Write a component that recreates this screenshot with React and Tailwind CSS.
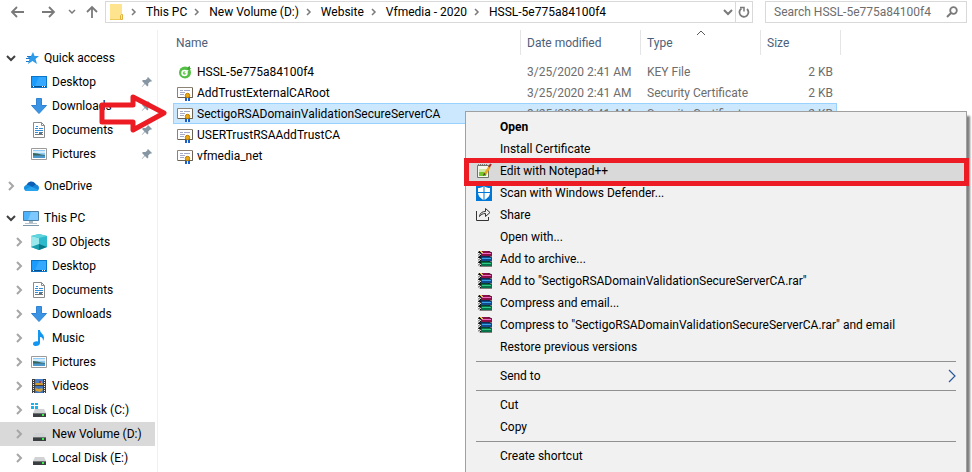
import clsx from "clsx";

const crumbs = ["This PC", "New Volume (D:)", "Website", "Vfmedia - 2020", "HSSL-5e775a84100f4"];

const quickAccess = [
  { name: "Desktop", icon: DesktopIcon },
  { name: "Downloads", icon: DownloadsIcon },
  { name: "Documents", icon: DocumentsIcon },
  { name: "Pictures", icon: PicturesIcon },
];

const thisPc = [
  { name: "3D Objects", icon: ObjectsIcon },
  { name: "Desktop", icon: DesktopIcon },
  { name: "Documents", icon: DocumentsIcon },
  { name: "Downloads", icon: DownloadsIcon },
  { name: "Music", icon: MusicIcon },
  { name: "Pictures", icon: PicturesIcon },
  { name: "Videos", icon: VideosIcon },
  { name: "Local Disk (C:)", icon: SystemDiskIcon },
  { name: "New Volume (D:)", icon: DiskIcon, selected: true },
  { name: "Local Disk (E:)", icon: DiskIcon },
];

const files = [
  { name: "HSSL-5e775a84100f4", type: "KEY File", icon: KeyFileIcon },
  { name: "AddTrustExternalCARoot", type: "Security Certificate", icon: CertificateIcon },
  {
    name: "SectigoRSADomainValidationSecureServerCA",
    type: "Security Certificate",
    icon: CertificateIcon,
    selected: true,
  },
  { name: "USERTrustRSAAddTrustCA", type: "Security Certificate", icon: CertificateIcon },
  { name: "vfmedia_net", type: "Security Certificate", icon: CertificateIcon },
];

const menu = [
  [
    { label: "Open", bold: true },
    { label: "Install Certificate" },
    { label: "Edit with Notepad++", icon: NotepadIcon, highlighted: true },
    { label: "Scan with Windows Defender...", icon: DefenderIcon },
    { label: "Share", icon: ShareIcon },
    { label: "Open with..." },
    { label: "Add to archive...", icon: RarIcon },
    { label: 'Add to "SectigoRSADomainValidationSecureServerCA.rar"', icon: RarIcon },
    { label: "Compress and email...", icon: RarIcon },
    { label: 'Compress to "SectigoRSADomainValidationSecureServerCA.rar" and email', icon: RarIcon },
    { label: "Restore previous versions" },
  ],
  [{ label: "Send to", submenu: true }],
  [{ label: "Cut" }, { label: "Copy" }],
  [{ label: "Create shortcut" }],
];

function Svg({ size = 16, className, children }) {
  return (
    <svg
      className={clsx("block shrink-0", className)}
      width={size}
      height={size}
      viewBox={`0 0 ${size} ${size}`}
      fill="none"
      aria-hidden="true"
    >
      {children}
    </svg>
  );
}

function DesktopIcon() {
  return (
    <Svg>
      <path d="M0 2h16v12H0z" fill="#0b76c9" />
      <path d="M1 3h14v9H1z" fill="#1a9cff" />
      <path d="M8 3h7v9H4z" fill="#35a9ff" />
      <path d="M1 12h14v1H1z" fill="#0a4f8c" />
      <path d="M2 12h1v1H2zM11 12h1v1h-1zM13 12h1v1h-1z" fill="#fff" />
    </Svg>
  );
}

function DownloadsIcon() {
  return (
    <Svg>
      <path d="M5.500.500h5v7h5L8 15.500.5 7.500h5z" fill="#3b93e4" stroke="#2f83d2" />
    </Svg>
  );
}

function DocumentsIcon() {
  return (
    <Svg>
      <path d="M2.500.500h8l3 3v12h-11z" fill="#fff" stroke="#8a8a8a" />
      <path d="M10.500.500v3h3" stroke="#8a8a8a" />
      <path d="M4 6.500h3M5 4.500h2M4 8.500h8M8 6.500h4M4 10.500h3" stroke="#2f8fdc" />
      <path d="M4 12.500h8M8 10.500h4" stroke="#777" />
      <path d="M8 10h3v2H8z" fill="#4b7896" />
    </Svg>
  );
}

function PicturesIcon() {
  return (
    <Svg>
      <path d="M.5 2.500h15v11H.5z" fill="#fff" stroke="#9b9b9b" />
      <path d="M2 4h12v8H2z" fill="#8fcbf5" />
      <path d="M2 5h12v2H2z" fill="#d5ecfb" />
      <path d="M2 7c3 0 6 1 8 1.500l4 .5v1H2z" fill="#39675c" />
      <path d="M2 9.500h12V12H2z" fill="#4b97cc" />
    </Svg>
  );
}

function ObjectsIcon() {
  return (
    <Svg>
      <path d="M8 0l8 2v11l-8 3-8-3V2z" fill="#2cb9cb" />
      <path d="M0 2l8 2v7l-8 2z" fill="#9ae7ec" />
      <path d="M0 2l8-2 8 2-8 2z" fill="#5fd4dd" />
      <path d="M0 13l8-3v6z" fill="#1b9cad" />
      <path d="M8 10l8 3-8 3z" fill="#087889" />
    </Svg>
  );
}

function MusicIcon() {
  return (
    <Svg>
      <path
        d="M7 0h2c0 3 4 4 4 8 0 1-.5 2-1 3 0-3-1-4-3-4v6c0 2-2 3-4 3-1.500 0-3-.6-3-2 0-2 2-3 5-2.600z"
        fill="#1296f0"
      />
    </Svg>
  );
}

function VideosIcon() {
  return (
    <Svg>
      <path d="M1 1h14v14H1z" fill="#3d3d3d" />
      <path d="M4 1h8v6H4z" fill="#4c7fc4" />
      <path d="M4 8h8v7H4z" fill="#3f74bd" />
      <path d="M5 5h3l2-2 2 3v1H4z" fill="#d19a2e" />
      <path d="M4 10l4 1 3-1 1 2-3 2-4-1z" fill="#d8a232" />
      <path d="M8 3h2v2H8z" fill="#a33a4b" />
      <path d="M2.500 2v13M13.500 2v13" stroke="#f2f2f2" strokeDasharray="1 1" />
    </Svg>
  );
}

function Drive() {
  return (
    <>
      <path d="M4 7h9l2 4H2z" fill="#d0d2d4" />
      <path d="M2 11h13v4H2z" fill="#3b3f41" />
      <path d="M2 11.500h13" stroke="#6f7477" />
      <path d="M11 12h2v2h-2z" fill="#3ef04a" />
    </>
  );
}

function DiskIcon() {
  return (
    <Svg>
      <Drive />
    </Svg>
  );
}

function SystemDiskIcon() {
  return (
    <Svg>
      <Drive />
      <path d="M0 1h3v2H0zM4 1h3v2H4zM0 4h3v3H0zM4 4h3v3H4z" fill="#18b4ee" />
    </Svg>
  );
}

function StarIcon() {
  return (
    <Svg>
      <path d="M10 2l1.500 4H16l-3.500 3 1.500 5-4.500-3L5 14l1.500-5L4 6h4z" fill="#2d9be8" />
      <path d="M4 6.500h4M3 8.500h4M3 11.500h3" stroke="#1c78cf" />
    </Svg>
  );
}

function CloudIcon() {
  return (
    <Svg>
      <path d="M3.500 7a5 5 0 0 1 8.800-1.500L14 8l-7 4-5-2z" fill="#0d5eb5" />
      <path d="M3 13a3.200 3.200 0 0 1 0-6c2-.6 4 .4 5 1.500L10 13z" fill="#1490df" />
      <path d="M12.500 6.500c2 0 3.500 1.500 3.500 3.500 0 1.800-1.300 3-3 3H3l7.500-5z" fill="#1784d8" />
      <path d="M1.500 12L8 8.500l7.500 3.300c-.5.800-1.500 1.200-2.500 1.200H3.500z" fill="#29a3ee" />
    </Svg>
  );
}

function ComputerIcon() {
  return (
    <Svg>
      <path d="M.5 1.500h15v9H.5z" fill="#4fb3fb" stroke="#4f7fa1" />
      <path d="M8 2h7v8H5z" fill="#7cc8ff" />
      <path d="M6 11h4v2H6z" fill="#a8b9c5" />
      <path d="M2 13.500h12" stroke="#b7c4ce" />
      <path d="M0 15.500h16" stroke="#7e97a8" />
    </Svg>
  );
}

function KeyFileIcon() {
  return (
    <Svg>
      <circle cx="8" cy="8.500" r="6" fill="#55bf45" />
      <circle cx="7.500" cy="9" r="2.500" fill="#6fd05b" stroke="#fff" strokeWidth="1.500" />
      <path d="M8 9l4-4" stroke="#fff" strokeWidth="1.500" />
      <path d="M10 6l1-3 2-1v2l1 .5-2 2z" fill="#3fa832" />
    </Svg>
  );
}

function CertificateIcon() {
  return (
    <Svg>
      <path d="M.5 2.500h15v10H.5z" fill="#fff" stroke="#8c8375" />
      <path d="M15.500 3v9.500H1" stroke="#6b6253" />
      <path d="M3 5.500h3M7 5.500h6M3 7.500h5M3 9.500h4" stroke="#a5abc4" />
      <path d="M9 12v4M12 12v4" stroke="#1d5fc8" strokeWidth="2" />
      <path d="M10 13h1v3h-1z" fill="#fff" />
      <circle cx="10.500" cy="10.500" r="2.200" fill="#e9a90f" stroke="#b97a06" />
    </Svg>
  );
}

function NotepadIcon() {
  return (
    <Svg>
      <path d="M1.500 2.500h11v12h-11z" fill="#f6f7ef" stroke="#6e7466" />
      <path d="M3 8h8l-1 5H3z" fill="#72c52a" />
      <path d="M3 6h8v3H3z" fill="#cce9a1" />
      <path d="M2 1.500h10" stroke="#777" strokeDasharray="1 1" />
      <path d="M13.500 4L9 11" stroke="#f0a622" strokeWidth="2.500" />
      <path d="M15 1l-2 3" stroke="#a3262b" strokeWidth="2" />
      <path d="M7 13l1-3 2 1z" fill="#4e3c24" />
    </Svg>
  );
}

function DefenderIcon() {
  return (
    <Svg>
      <path d="M0 0h16v16H0z" fill="#0078d7" />
      <path d="M8 1c2 1.500 3.500 2 6 2v4c0 4-2.500 6.500-6 8-3.500-1.500-6-4-6-8V3c2.500 0 4-.5 6-2z" fill="#fff" />
      <path d="M8 1v14M2 7.500h12" stroke="#0078d7" />
    </Svg>
  );
}

function ShareIcon() {
  return (
    <Svg>
      <path
        d="M.5 4v9.500h12V10M3.500 9.500C4 6 6 4.500 9.500 4.500v-3l4.500 4-4.500 4v-3c-3 0-4.500 1-6 3z"
        stroke="#333"
      />
    </Svg>
  );
}

// One book of the WinRAR stack
function Book({ y, cover, light }) {
  return (
    <g transform={`translate(0 ${y})`}>
      <path d="M3 0h10l3 1.500v4H4L1 3.500z" fill="#111" />
      <path d="M3 0h9l4 2H6z" fill={cover} />
      <path d="M5 2h11v3H5z" fill={cover} />
      <path d="M6 2.500h9" stroke={light} />
      <path d="M0 1.500l5 2M0 3l4 1.500" stroke="#fff" />
    </g>
  );
}

function RarIcon() {
  return (
    <Svg>
      <Book y={10} cover="#08734a" light="#2fca83" />
      <Book y={5} cover="#104a91" light="#39a4e6" />
      <Book y={0} cover="#8b1048" light="#ef6cc0" />
      <path d="M4 .5h2M5 1.500h2" stroke="#e8cf3f" />
    </Svg>
  );
}

function FolderIcon() {
  return (
    <Svg className="mr-1">
      <path d="M0 0h12v16H0z" fill="#ffe490" />
      <path d="M0 15.500h10" stroke="#efc95a" />
      <path d="M10.500 15.500v-4l1-1h1v5z" fill="#ffe9a6" stroke="#e0b13c" />
    </Svg>
  );
}

function PinIcon() {
  return (
    <Svg size={12}>
      <path
        d="M7 1l4 4-1 .7-.8-.2-2 2 .1 2-1 1L4 8l-3 3-.3-.3L3.500 7.500 1 5l1-1 2.500.1 2-1.800L6.300 1.700z"
        fill="#8796a3"
      />
    </Svg>
  );
}

function ChevronRight({ className }) {
  return (
    <Svg size={10} className={className}>
      <path d="M3 1l4 4-4 4" stroke="currentColor" strokeWidth="2" />
    </Svg>
  );
}

function ChevronDown({ className }) {
  return (
    <Svg size={10} className={className}>
      <path d="M1 3l4 4 4-4" stroke="currentColor" strokeWidth="2" />
    </Svg>
  );
}

function Toolbar() {
  return (
    <header className="flex h-6 items-start pt-px text-[#7a7a7a]">
      <nav className="flex h-[22px] w-[105px] shrink-0 items-center pl-2.5" aria-label="History">
        <button aria-label="Back">
          <Svg>
            <path d="M2 8h12M7 3L2 8l5 5" stroke="currentColor" strokeWidth="1.800" />
          </Svg>
        </button>
        <button className="ml-3.5" aria-label="Forward">
          <Svg>
            <path d="M2 8h12M9 3l5 5-5 5" stroke="currentColor" strokeWidth="1.800" />
          </Svg>
        </button>
        <button className="ml-3" aria-label="Recent locations">
          <Svg size={8}>
            <path d="M1 2l3 3 3-3" stroke="currentColor" strokeWidth="1.500" />
          </Svg>
        </button>
        <button className="ml-2" aria-label="Up">
          <Svg>
            <path d="M8 14V3M3 8l5-5 5 5" stroke="currentColor" strokeWidth="1.800" />
          </Svg>
        </button>
      </nav>
      <div className="flex h-[22px] flex-1 items-center border border-[#d9d9d9] pl-1">
        <FolderIcon />
        {crumbs.map((crumb) => (
          <span key={crumb} className="flex items-center">
            <Svg size={8} className="mr-2">
              <path d="M2 1l3 3-3 3" stroke="currentColor" strokeWidth="1.500" />
            </Svg>
            <button className="mr-1.5 whitespace-nowrap text-black">{crumb}</button>
          </span>
        ))}
        <button className="mr-0.5 ml-auto" aria-label="Previous locations">
          <ChevronDown />
        </button>
        <button
          className="flex h-full w-[17px] items-center justify-center border-l border-[#d9d9d9]"
          aria-label="Refresh"
        >
          <Svg size={12}>
            <path d="M3.500 2.500A4.500 4.500 0 1 0 9 3" stroke="currentColor" strokeWidth="1.800" />
            <path d="M2 1.500h4v4" stroke="currentColor" strokeWidth="1.500" />
          </Svg>
        </button>
      </div>
      <label className="mr-[5px] ml-3 flex h-[22px] w-[202px] items-center border border-[#d9d9d9] pr-2 pl-2">
        <input
          className="w-0 flex-1 outline-none placeholder:text-[#6d6d6d]"
          aria-label="Search"
          placeholder="Search HSSL-5e775a84100f4"
        />
        <Svg size={12}>
          <circle cx="7.500" cy="4.500" r="3.300" stroke="currentColor" strokeWidth="1.800" />
          <path d="M5 7l-4 4" stroke="currentColor" strokeWidth="2" />
        </Svg>
      </label>
    </header>
  );
}

function TreeRoot({ name, icon: Icon, open, className }) {
  return (
    <button className={clsx("flex h-6 w-full items-center pl-1.5", className)}>
      {open ? <ChevronDown className="text-[#404040]" /> : <ChevronRight className="text-[#a6a6a6]" />}
      <span className="mr-[5px] ml-[7px]">
        <Icon />
      </span>
      {name}
    </button>
  );
}

function TreeItem({ name, icon: Icon, selected, pinned }) {
  return (
    <li>
      <button className={clsx("flex h-6 w-full items-center pl-3.5", selected && "bg-[#d9d9d9]")}>
        <ChevronRight className={clsx("mr-[7px] text-[#a6a6a6]", pinned && "invisible")} />
        <Icon />
        <span className="ml-[5px] flex-1 text-left whitespace-nowrap">{name}</span>
        {pinned && (
          <span className="mr-0.5">
            <PinIcon />
          </span>
        )}
      </button>
    </li>
  );
}

function Sidebar() {
  return (
    <aside className="w-[158px] shrink-0 border-r border-[#f0f0f0] pt-4 pr-0.5">
      <TreeRoot name="Quick access" icon={StarIcon} open />
      <ul>
        {quickAccess.map((item) => (
          <TreeItem key={item.name} {...item} pinned />
        ))}
      </ul>
      <TreeRoot name="OneDrive" icon={CloudIcon} className="my-2" />
      <TreeRoot name="This PC" icon={ComputerIcon} open />
      <ul>
        {thisPc.map((item) => (
          <TreeItem key={item.name} {...item} />
        ))}
      </ul>
    </aside>
  );
}

function FileTable() {
  const heading = "h-[25px] border-r border-[#e5e5e5] p-0 text-left font-normal";
  return (
    <table className="ml-[15px] w-[668px] table-fixed border-separate border-spacing-0">
      <colgroup>
        <col />
        <col className="w-[120px]" />
        <col className="w-[120px]" />
        <col className="w-[76px]" />
        <col className="w-1" />
      </colgroup>
      <thead className="text-[#4c607a]">
        <tr>
          <th className={clsx(heading, "pl-[3px]")}>Name</th>
          <th className={clsx(heading, "pl-1.5")}>Date modified</th>
          <th className={clsx(heading, "relative pl-1.5")}>
            <Svg size={8} className="absolute top-0 left-14">
              <path d="M0 5l4-4 4 4" stroke="#5a5a5a" />
            </Svg>
            Type
          </th>
          <th className="p-0 pl-1.5 text-left font-normal">Size</th>
          <th className={heading} />
        </tr>
        <tr className="h-1.5" />
      </thead>
      <tbody>
        {files.map(({ name, type, icon: Icon, selected }) => {
          const cell = clsx(
            "h-[21px] border-y p-0 whitespace-nowrap",
            selected ? "border-[#99d1ff] bg-[#cce8ff]" : "border-transparent"
          );
          return (
            <tr key={name} className="text-[#6d6d6d]">
              <td className={clsx(cell, "border-l pl-[3px] text-black")}>
                <span className="flex items-center gap-1">
                  <Icon />
                  {name}
                </span>
              </td>
              <td className={clsx(cell, "pl-1.5")}>3/25/2020 2:41 AM</td>
              <td className={clsx(cell, "pl-1.5")}>{type}</td>
              <td className={clsx(cell, "border-r pr-[3px] text-right")}>2 KB</td>
            </tr>
          );
        })}
      </tbody>
    </table>
  );
}

function ContextMenu() {
  return (
    <div
      className="absolute top-[111px] left-[465px] h-[520px] w-[502px] border border-[#a0a0a0] bg-[#f1f1f1] py-1 shadow-[3px_5px_2px_rgba(0,0,0,0.5)]"
      role="menu"
    >
      {menu.map((group, index) => (
        <div key={index}>
          {index > 0 && <hr className="mx-2.5 my-[3px] border-[#919191]" />}
          {group.map(({ label, icon: Icon, bold, submenu, highlighted }) => (
            <div key={label} className="relative">
              <button
                className={clsx(
                  "flex h-[22px] w-full items-center gap-2 px-2.5 whitespace-nowrap",
                  bold && "font-bold",
                  highlighted && "bg-[#d9d9d9]"
                )}
                role="menuitem"
              >
                <span className="w-4 shrink-0">{Icon && <Icon />}</span>
                {label}
                {submenu && (
                  <Svg className="ml-auto">
                    <path d="M9 2l6 6-6 6" stroke="#2a5a9a" strokeWidth="1.200" />
                  </Svg>
                )}
              </button>
              {highlighted && (
                <span className="pointer-events-none absolute -top-0.5 -right-[3px] -left-0.5 z-10 h-7 border-5 border-[#ed1c24]" />
              )}
            </div>
          ))}
        </div>
      ))}
    </div>
  );
}

export default function App() {
  return (
    <div className="relative flex h-screen flex-col overflow-hidden bg-white font-['Roboto','Noto_Sans',sans-serif] text-[12px] leading-4 text-black">
      <Toolbar />
      <div className="flex flex-1 pt-1.5">
        <Sidebar />
        <main className="flex-1">
          <FileTable />
        </main>
      </div>
      <svg
        className="pointer-events-none absolute top-[90px] left-[97px]"
        width="72"
        height="46"
        viewBox="0 0 72 46"
        fill="none"
        aria-hidden="true"
      >
        <path d="M5 15h31V7l31 16-31 17v-8H5z" stroke="#ed1c24" strokeWidth="5" strokeLinejoin="round" />
      </svg>
      <ContextMenu />
    </div>
  );
}
